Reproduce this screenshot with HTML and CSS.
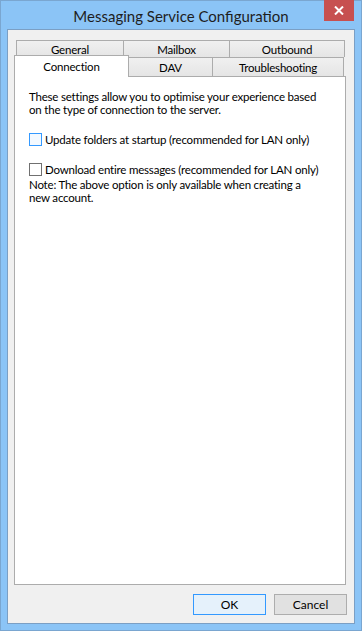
FILE: index.html
```html
<!DOCTYPE html>
<html>
<head>
<meta charset="utf-8">
<link rel="stylesheet" href="styles.css">
</head>
<body>
<div class="window">
  <div class="titlebar">
    <div class="title">Messaging Service Configuration</div>
    <div class="close">
      <svg width="10" height="9" viewBox="0 0 10 9"><path d="M1 0.5 L9 8.5 M9 0.5 L1 8.5" stroke="#fff" stroke-width="2"/></svg>
    </div>
  </div>
  <div class="content">
    <div class="tabs">
      <div class="tabrow row1">
        <div class="tab t-general">General</div>
        <div class="tab t-mailbox">Mailbox</div>
        <div class="tab t-outbound">Outbound</div>
      </div>
      <div class="tabrow row2">
        <div class="tab selected t-connection">Connection</div>
        <div class="tab t-dav">DAV</div>
        <div class="tab t-trouble">Troubleshooting</div>
      </div>
    </div>
    <div class="panel">
      <p class="intro">These settings allow you to optimise your experience based<br>on the type of connection to the server.</p>
      <label class="check first"><span class="box hover"></span>Update folders at startup (recommended for LAN only)</label>
      <label class="check second"><span class="box"></span>Download entire messages (recommended for LAN only)</label>
      <p class="note">Note: The above option is only available when creating a<br>new account.</p>
    </div>
    <div class="buttons">
      <button class="btn default">OK</button>
      <button class="btn">Cancel</button>
    </div>
  </div>
</div>
</body>
</html>
```

FILE: styles.css
```css
* { box-sizing: border-box; }
html, body { margin: 0; padding: 0; }
body {
  font-family: Lato, "Noto Sans", sans-serif;
  font-size: 11.5px;
  letter-spacing: -0.2px;
  color: #000;
  background: #8bc4f6;
}
.window {
  width: 362px;
  height: 631px;
  background: #8bc4f6;
  border: 1px solid #7aa6d0;
  display: flex;
  flex-direction: column;
  position: relative;
}
.titlebar {
  height: 28px;
  display: flex;
  align-items: center;
  justify-content: center;
}
.title {
  font-size: 15px;
  letter-spacing: 0;
  color: #1e1e1e;
  margin-top: 2px;
  white-space: nowrap;
}
.close {
  position: absolute;
  top: -1px;
  right: 7px;
  width: 30px;
  height: 21px;
  background: #c75050;
  display: flex;
  align-items: center;
  justify-content: center;
}
.content {
  flex: 1;
  margin: 0 6px 6px 6px;
  background: #f0f0f0;
  border: 1px solid #7b9fc4;
  padding: 10px 8px 0 6px;
  display: flex;
  flex-direction: column;
}
.tabs { display: flex; flex-direction: column; }
.tabrow { display: flex; }
.row1 { margin-left: 2px; height: 17px; }
.row2 { height: 19px; }
.tab {
  border: 1px solid #acacac;
  border-bottom: none;
  background: linear-gradient(#f0f0f0, #e5e5e5);
  text-align: center;
  line-height: 18px;
  margin-right: -1px;
  white-space: nowrap;
  overflow: hidden;
}
.row2 .tab { line-height: 20px; }
.t-general { width: 108px; }
.t-mailbox { width: 107px; }
.t-outbound { width: 116px; }
.t-connection { width: 115px; }
.t-dav { width: 85px; }
.t-trouble { width: 132px; }
.row2 .tab.selected {
  background: #fff;
  position: relative;
  z-index: 2;
  margin-top: -2px;
  height: 22px;
  line-height: 21px;
}
.panel {
  height: 509px;
  background: #fff;
  border: 1px solid #acacac;
  padding: 13px 0 0 14px;
  white-space: nowrap;
}
.intro, .note {
  margin: 0;
  line-height: 13px;
}
.check {
  display: flex;
  align-items: center;
  height: 13px;
  line-height: 13px;
}
.check.first { margin-top: 17px; }
.check.second { margin-top: 17px; }
.box {
  width: 13px;
  height: 13px;
  border: 1px solid #707070;
  background: #fff;
  margin-right: 3px;
  flex: none;
}
.box.hover { border-color: #3399ff; background: #f3f9ff; }
.note { margin-top: 2px; }
.buttons {
  display: flex;
  justify-content: flex-end;
  gap: 8px;
  margin-top: 9px;
  margin-right: -1px;
}
.btn {
  width: 73px;
  height: 21px;
  font-family: inherit;
  font-size: 12px;
  letter-spacing: 0;
  color: #000;
  border: 1px solid #adadad;
  background: #e1e1e1;
  padding: 0;
  border-radius: 0;
}
.btn.default { border-color: #3399ff; background: #e5f1fb; }
```
